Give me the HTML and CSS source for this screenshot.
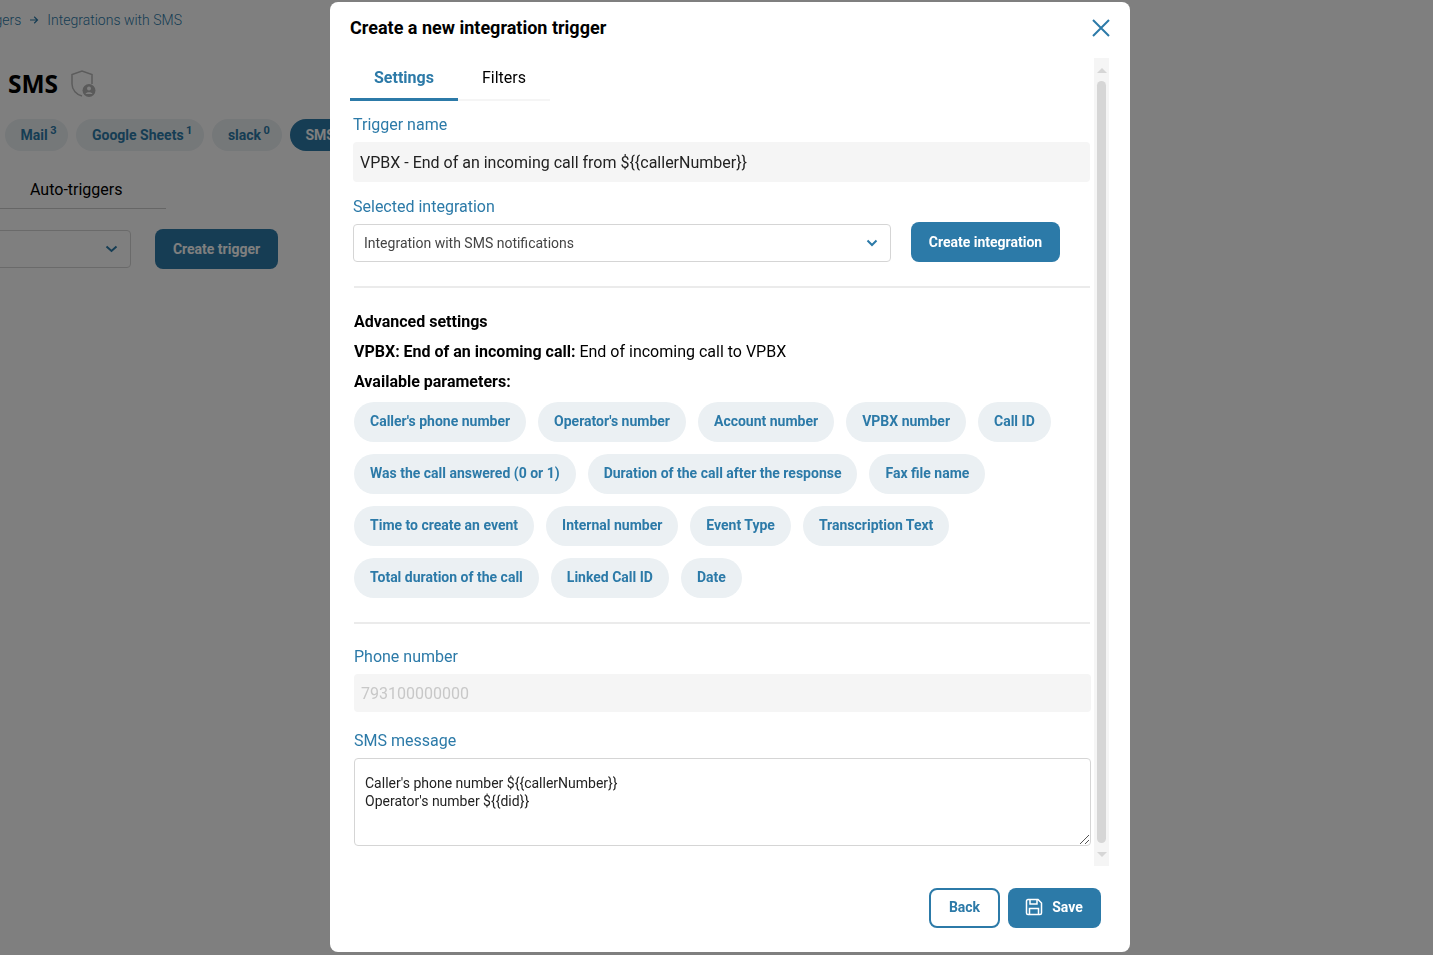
FILE: index.html
```html
<!DOCTYPE html>
<html lang="en">
<head>
    <meta charset="UTF-8">
    <title>Create a new integration trigger</title>
    <link rel="stylesheet" href="styles.css">
</head>
<body>
    <div class="page">
        <div class="crumbs">
            <span>Triggers</span>
            <svg class="crumb-arrow" width="10" height="10" viewBox="0 0 10 10"><path d="M1 5h7.500M5.200 1.800L8.500 5 5.200 8.200" fill="none" stroke="currentColor" stroke-width="1.200"/></svg>
            <span>Integrations with SMS</span>
        </div>
        <div class="page-title">
            <h1>SMS</h1>
            <svg width="28" height="28" viewBox="0 0 28 28"><path d="M23 14V4.500L13 1 3 4.500V14c0 6 4.500 10.500 10 12" fill="none" stroke="#b8b8b8" stroke-width="1.500"/><circle cx="20" cy="20.500" r="6.500" fill="#b4b4b4"/><circle cx="20" cy="18.500" r="2" fill="#fff"/><path d="M16.500 24c.5-2.500 6.500-2.500 7 0z" fill="#fff"/></svg>
        </div>
        <div class="pills">
            <span class="pill">Mail<sup>3</sup></span>
            <span class="pill">Google Sheets<sup>1</sup></span>
            <span class="pill">slack<sup>0</sup></span>
            <span class="pill pill-active">SMS</span>
        </div>
        <div class="page-tabs"><span>Auto-triggers</span></div>
        <div class="page-actions">
            <div class="page-select">
                <svg width="13" height="8" viewBox="0 0 13 8"><path d="M1.500 1.500L6.500 6l5-4.500" fill="none" stroke="#2c7aa8" stroke-width="2"/></svg>
            </div>
            <button class="btn btn-trigger">Create trigger</button>
        </div>
    </div>

    <div class="overlay"></div>

    <div class="modal">
        <div class="modal-head">
            <h2>Create a new integration trigger</h2>
            <svg class="close" width="18" height="18" viewBox="0 0 18 18"><path d="M1 1l16 16M17 1L1 17" stroke="#2c7aa8" stroke-width="2" fill="none"/></svg>
        </div>

        <div class="modal-middle">
            <div class="modal-body">
                <div class="tabs">
                    <div class="tab tab-active">Settings</div>
                    <div class="tab">Filters</div>
                </div>

                <div class="label label-first">Trigger name</div>
                <div class="input">VPBX - End of an incoming call from ${{callerNumber}}</div>

                <div class="label label-second">Selected integration</div>
                <div class="select-row">
                    <div class="select">
                        <span>Integration with SMS notifications</span>
                        <svg width="12" height="8" viewBox="0 0 12 8"><path d="M1.500 1.500L6 6l4.500-4.500" fill="none" stroke="#2c7aa8" stroke-width="2"/></svg>
                    </div>
                    <button class="btn btn-create">Create integration</button>
                </div>

                <div class="advanced">
                    <div class="adv-line"><b>Advanced settings</b></div>
                    <div class="adv-line"><b>VPBX: End of an incoming call:</b> End of incoming call to VPBX</div>
                    <div class="adv-line"><b>Available parameters:</b></div>
                    <div class="chips">
                        <span class="chip">Caller's phone number</span>
                        <span class="chip">Operator's number</span>
                        <span class="chip">Account number</span>
                        <span class="chip">VPBX number</span>
                        <span class="chip">Call ID</span>
                        <span class="chip">Was the call answered (0 or 1)</span>
                        <span class="chip">Duration of the call after the response</span>
                        <span class="chip">Fax file name</span>
                        <span class="chip">Time to create an event</span>
                        <span class="chip">Internal number</span>
                        <span class="chip">Event Type</span>
                        <span class="chip">Transcription Text</span>
                        <span class="chip">Total duration of the call</span>
                        <span class="chip">Linked Call ID</span>
                        <span class="chip">Date</span>
                    </div>
                </div>

                <div class="sms-block">
                    <div class="label">Phone number</div>
                    <div class="input input-disabled">793100000000</div>
                    <div class="label label-sms">SMS message</div>
                    <div class="textarea">
                        Caller's phone number ${{callerNumber}}<br>
                        Operator's number ${{did}}
                        <svg class="grip" width="9" height="9" viewBox="0 0 9 9"><path d="M0 9l9-9M5 9l4-4" stroke="#555" stroke-width="1" fill="none"/></svg>
                    </div>
                </div>
            </div>

            <div class="scrollbar">
                <div class="arrow-up"></div>
                <div class="thumb"></div>
                <div class="arrow-down"></div>
            </div>
        </div>

        <div class="modal-foot">
            <button class="btn btn-back">Back</button>
            <button class="btn btn-save">
                <svg width="18" height="18" viewBox="0 0 18 18" fill="none" stroke="#fff" stroke-width="1.500"><path d="M3 1.500h10l3.500 3.500v10a1.500 1.500 0 0 1-1.500 1.500H3A1.500 1.500 0 0 1 1.500 15V3A1.500 1.500 0 0 1 3 1.500z"/><path d="M5 1.500v4.500h7V1.500M4.500 16.500V10.500h9v6"/></svg>
                Save
            </button>
        </div>
    </div>
</body>
</html>
```

FILE: styles.css
```css
* {
    box-sizing: border-box;
}
html, body {
    margin: 0;
    height: 100%;
    overflow: hidden;
}
body {
    font-family: Roboto, "Liberation Sans", sans-serif;
    background: #fff;
    color: #000;
}
b {
    font-weight: 700;
}
button {
    font-family: inherit;
}

/* page behind the dialog */
.page {
    padding: 0 0 0 5px;
}
.crumbs {
    display: flex;
    align-items: center;
    gap: 8px;
    height: 20px;
    margin: 10px 0 0 -34px;
    font-size: 14px;
    font-weight: 300;
    color: #2c7aa8;
}
.crumb-arrow {
    color: #2c7aa8;
}
.page-title {
    display: flex;
    align-items: center;
    gap: 11px;
    height: 30px;
    margin: 39px 0 0 3px;
}
.page-title h1 {
    margin: 0;
    font-family: "Open Sans", sans-serif;
    font-size: 24.500px;
    font-weight: 700;
    line-height: 30px;
}
.pills {
    display: flex;
    gap: 8px;
    margin-top: 20px;
    width: 500px;
}
.pill {
    height: 32px;
    padding: 0 12px 0 15.500px;
    border-radius: 16px;
    background: #ebf0f3;
    color: #2c7aa8;
    font-size: 14px;
    font-weight: 700;
    line-height: 32px;
    white-space: nowrap;
}
.pill sup {
    margin-left: 2.500px;
    font-size: 11px;
    line-height: 0;
    vertical-align: 6px;
}
.pill-active {
    background: #2c7aa8;
    color: #fff;
    padding-right: 40px;
}
.page-tabs {
    width: 171px;
    height: 43px;
    margin: 15px 0 0 -10px;
    padding: 13px 0 0 35px;
    border-bottom: 1px solid #ccc;
    font-size: 16px;
    line-height: 22px;
}
.page-actions {
    display: flex;
    align-items: flex-start;
    gap: 24px;
    margin: 20px 0 0 -20px;
}
.page-select {
    display: flex;
    align-items: center;
    justify-content: flex-end;
    width: 146px;
    height: 38px;
    margin-top: 1px;
    padding-right: 12px;
    border: 1px solid #d5d5d5;
    border-radius: 4px;
}

/* shade + dialog */
.overlay {
    position: fixed;
    inset: 0;
    background: rgba(0, 0, 0, 0.5);
}
.modal {
    position: fixed;
    left: 330px;
    top: 2px;
    width: 800px;
    height: 950px;
    display: flex;
    flex-direction: column;
    background: #fff;
    border-radius: 8px;
}
.modal-head {
    display: flex;
    align-items: center;
    justify-content: space-between;
    height: 56px;
    padding: 0 20px 5px 20px;
}
.modal-head h2 {
    margin: 0;
    font-size: 18px;
    font-weight: 700;
}
.modal-middle {
    display: flex;
    height: 808px;
    padding-left: 20px;
}
.modal-body {
    width: 741px;
}
.tabs {
    display: flex;
    width: 200px;
    height: 43px;
    border-bottom: 2px solid #f5f5f5;
}
.tab {
    height: 43px;
    padding: 9px 24px 0;
    font-size: 16px;
    line-height: 22px;
}
.tab-active {
    color: #2c7aa8;
    font-weight: 700;
    border-bottom: 3px solid #2c7aa8;
}
.label {
    height: 20px;
    font-size: 16px;
    line-height: 20px;
    color: #2c7aa8;
}
.label-first {
    margin: 14px 0 7px 3px;
}
.label-second {
    margin: 15px 0 5px 3px;
}
.input {
    width: 737px;
    height: 40px;
    margin-left: 3px;
    padding: 1px 0 0 7px;
    border-radius: 4px;
    background: #f5f5f5;
    font-size: 16px;
    line-height: 40px;
    color: #222;
}
.select-row {
    display: flex;
    align-items: flex-end;
    gap: 20px;
    margin: 0 0 0 3px;
}
.select {
    display: flex;
    align-items: center;
    justify-content: space-between;
    width: 538px;
    height: 38px;
    padding: 0 12px 0 10px;
    border: 1px solid #d5d5d5;
    border-radius: 4px;
    font-size: 14px;
    color: #444;
}
.btn {
    border-radius: 8px;
    border: none;
    font-size: 14px;
    font-weight: 700;
    color: #fff;
    background: #2c7aa8;
}
.btn-create {
    width: 149px;
    height: 40px;
}
.btn-trigger {
    width: 123px;
    height: 40px;
}
.advanced {
    margin: 24px 0 0 4px;
    padding: 19px 0 24px;
    width: 736px;
    border-top: 2px solid #ebebeb;
    border-bottom: 2px solid #ebebeb;
}
.adv-line {
    height: 30px;
    font-size: 16px;
    line-height: 30px;
}
.chips {
    display: flex;
    flex-wrap: wrap;
    gap: 12px;
    margin-top: 5px;
}
.chip {
    height: 40px;
    padding: 0 16px;
    border-radius: 20px;
    background: #ebf0f3;
    color: #2c7aa8;
    font-size: 14px;
    font-weight: 700;
    line-height: 38px;
    white-space: nowrap;
}
.sms-block {
    margin: 23px 0 0 4px;
}
.input-disabled {
    margin: 7px 0 0;
    height: 38px;
    line-height: 38px;
    color: #c8c8c8;
}
.label-sms {
    margin: 19px 0 7px;
}
.textarea {
    position: relative;
    width: 737px;
    height: 88px;
    padding: 15px 10px 0;
    border: 1px solid #d5d5d5;
    border-radius: 4px;
    font-size: 14px;
    line-height: 18px;
    color: #222;
}
.grip {
    position: absolute;
    right: 1px;
    bottom: 1px;
}
.scrollbar {
    display: flex;
    flex-direction: column;
    align-items: center;
    width: 15px;
    height: 808px;
    margin-left: 3px;
    background: #f5f5f5;
}
.arrow-up, .arrow-down {
    width: 0;
    height: 0;
    border-left: 5px solid transparent;
    border-right: 5px solid transparent;
}
.arrow-up {
    margin-top: 10px;
    border-bottom: 5px solid #d6d6d6;
}
.arrow-down {
    margin-top: 9px;
    border-top: 5px solid #d6d6d6;
}
.thumb {
    width: 9px;
    height: 762px;
    margin-top: 8px;
    border-radius: 5px;
    background: #d6d6d6;
}
.modal-foot {
    display: flex;
    justify-content: flex-end;
    gap: 8px;
    padding: 22px 29px 0 0;
}
.btn-back {
    width: 71px;
    height: 40px;
    padding-bottom: 3px;
    background: #fff;
    color: #2c7aa8;
    border: 2px solid #2c7aa8;
}
.btn-save {
    display: flex;
    align-items: center;
    justify-content: center;
    gap: 9px;
    width: 93px;
    height: 40px;
    padding: 0 1px 3px 0;
}
```
